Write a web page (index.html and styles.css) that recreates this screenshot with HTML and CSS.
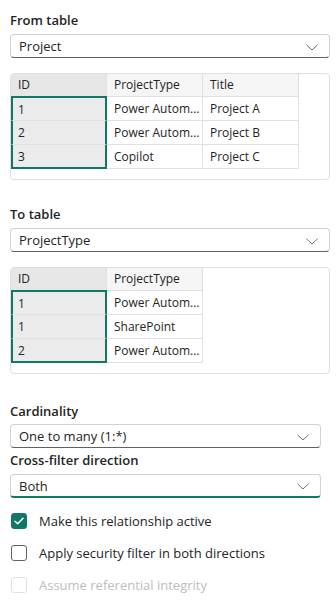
FILE: index.html
```html
<!DOCTYPE html>
<html lang="en">
<head>
  <meta charset="UTF-8">
  <meta name="viewport" content="width=device-width, initial-scale=1.0">
  <title>Edit relationship</title>
  <link rel="stylesheet" href="styles.css">
</head>
<body>
  <div class="panel">
    <div class="field-label">From table</div>
    <div class="dropdown">
      <span>Project</span>
      <svg class="chevron" width="12" height="7" viewBox="0 0 12 7"><path d="M0.5 0.8 L6 6 L11.5 0.8" fill="none" stroke="#707070" stroke-width="1"/></svg>
    </div>

    <div class="preview">
      <div class="grid cols-3">
        <div class="cell head key">ID</div>
        <div class="cell head">ProjectType</div>
        <div class="cell head">Title</div>

        <div class="cell key first">1</div>
        <div class="cell">Power Autom...</div>
        <div class="cell">Project A</div>

        <div class="cell key">2</div>
        <div class="cell">Power Autom...</div>
        <div class="cell">Project B</div>

        <div class="cell key last">3</div>
        <div class="cell">Copilot</div>
        <div class="cell">Project C</div>
      </div>
    </div>

    <div class="field-label second">To table</div>
    <div class="dropdown">
      <span>ProjectType</span>
      <svg class="chevron" width="12" height="7" viewBox="0 0 12 7"><path d="M0.5 0.8 L6 6 L11.5 0.8" fill="none" stroke="#707070" stroke-width="1"/></svg>
    </div>

    <div class="preview">
      <div class="grid cols-2">
        <div class="cell head key">ID</div>
        <div class="cell head">ProjectType</div>

        <div class="cell key first">1</div>
        <div class="cell">Power Autom...</div>

        <div class="cell key">1</div>
        <div class="cell">SharePoint</div>

        <div class="cell key last">2</div>
        <div class="cell">Power Autom...</div>
      </div>
    </div>

    <div class="field-label third">Cardinality</div>
    <div class="dropdown narrow">
      <span>One to many (1:*)</span>
      <svg class="chevron" width="12" height="7" viewBox="0 0 12 7"><path d="M0.5 0.8 L6 6 L11.5 0.8" fill="none" stroke="#707070" stroke-width="1"/></svg>
    </div>

    <div class="field-label tight">Cross-filter direction</div>
    <div class="dropdown narrow focused">
      <span>Both</span>
      <svg class="chevron" width="12" height="7" viewBox="0 0 12 7"><path d="M0.5 0.8 L6 6 L11.5 0.8" fill="none" stroke="#707070" stroke-width="1"/></svg>
    </div>

    <div class="checks">
      <label class="check">
        <span class="box checked">
          <svg width="10" height="8" viewBox="0 0 10 8"><path d="M1 4.2 L3.7 6.7 L9 1.2" fill="none" stroke="#fff" stroke-width="1.5" stroke-linecap="round" stroke-linejoin="round"/></svg>
        </span>
        Make this relationship active
      </label>
      <label class="check">
        <span class="box"></span>
        Apply security filter in both directions
      </label>
      <label class="check disabled">
        <span class="box"></span>
        Assume referential integrity
      </label>
    </div>
  </div>
</body>
</html>
```

FILE: styles.css
```css
body {
  font-family: "Open Sans", "Noto Sans", sans-serif;
  background-color: #fff;
  color: #242424;
  margin: 0;
  padding: 0;
}
.panel {
  padding: 10px 6px 0 10px;
}
.field-label {
  font-size: 13px;
  font-weight: 600;
  line-height: 20px;
  margin-bottom: 4px;
}
.field-label.second {
  margin-top: 24px;
}
.field-label.third {
  margin-top: 27px;
  margin-bottom: 3px;
}
.field-label.tight {
  margin-top: 2px;
}
.dropdown {
  display: flex;
  align-items: center;
  justify-content: space-between;
  height: 24px;
  box-sizing: border-box;
  padding: 0 11px 0 8px;
  border: 1px solid #d1d1d1;
  border-bottom-color: #616161;
  border-radius: 4px;
  font-size: 13px;
}
.dropdown.narrow {
  margin-right: 9px;
}
.dropdown.focused {
  border-bottom: 2px solid #117865;
}
.chevron {
  margin-top: 2px;
}
.preview {
  margin-top: 15px;
  border: 1px solid #e0e0e0;
  border-radius: 4px;
  padding-bottom: 10px;
}
.grid {
  display: grid;
  font-size: 12px;
}
.cols-3 {
  grid-template-columns: 96px 96px 96px;
}
.cols-2 {
  grid-template-columns: 96px 96px;
}
.cell {
  height: 24px;
  line-height: 23px;
  box-sizing: border-box;
  padding-left: 7px;
  border-right: 1px solid #e0e0e0;
  border-bottom: 1px solid #e0e0e0;
  white-space: nowrap;
  overflow: hidden;
}
.cell.head {
  height: 23px;
  line-height: 22px;
  background: #f5f5f5;
}
.cell.key {
  background: #ebebeb;
  border-left: 2px solid transparent;
  border-right: 2px solid #117865;
  border-left-color: #117865;
  padding-left: 5px;
}
.cell.head.key {
  background: #e6e6e6;
  border-left: 0;
  border-right: 1px solid #e0e0e0;
  padding-left: 7px;
}
.cell.first {
  border-top: 2px solid #117865;
  margin-top: -1px;
  height: 25px;
}
.cell.last {
  border-bottom: 2px solid #117865;
}
.checks {
  margin-top: 15px;
  display: flex;
  flex-direction: column;
  gap: 16px;
}
.check {
  display: flex;
  align-items: center;
  gap: 12px;
  font-size: 13px;
  line-height: 16px;
  padding-left: 1px;
}
.box {
  width: 16px;
  height: 16px;
  box-sizing: border-box;
  border: 1px solid #616161;
  border-radius: 3px;
  display: flex;
  align-items: center;
  justify-content: center;
}
.box.checked {
  background: #117865;
  border-color: #117865;
}
.check.disabled {
  color: #bdbdbd;
}
.check.disabled .box {
  border-color: #e0e0e0;
}
```
